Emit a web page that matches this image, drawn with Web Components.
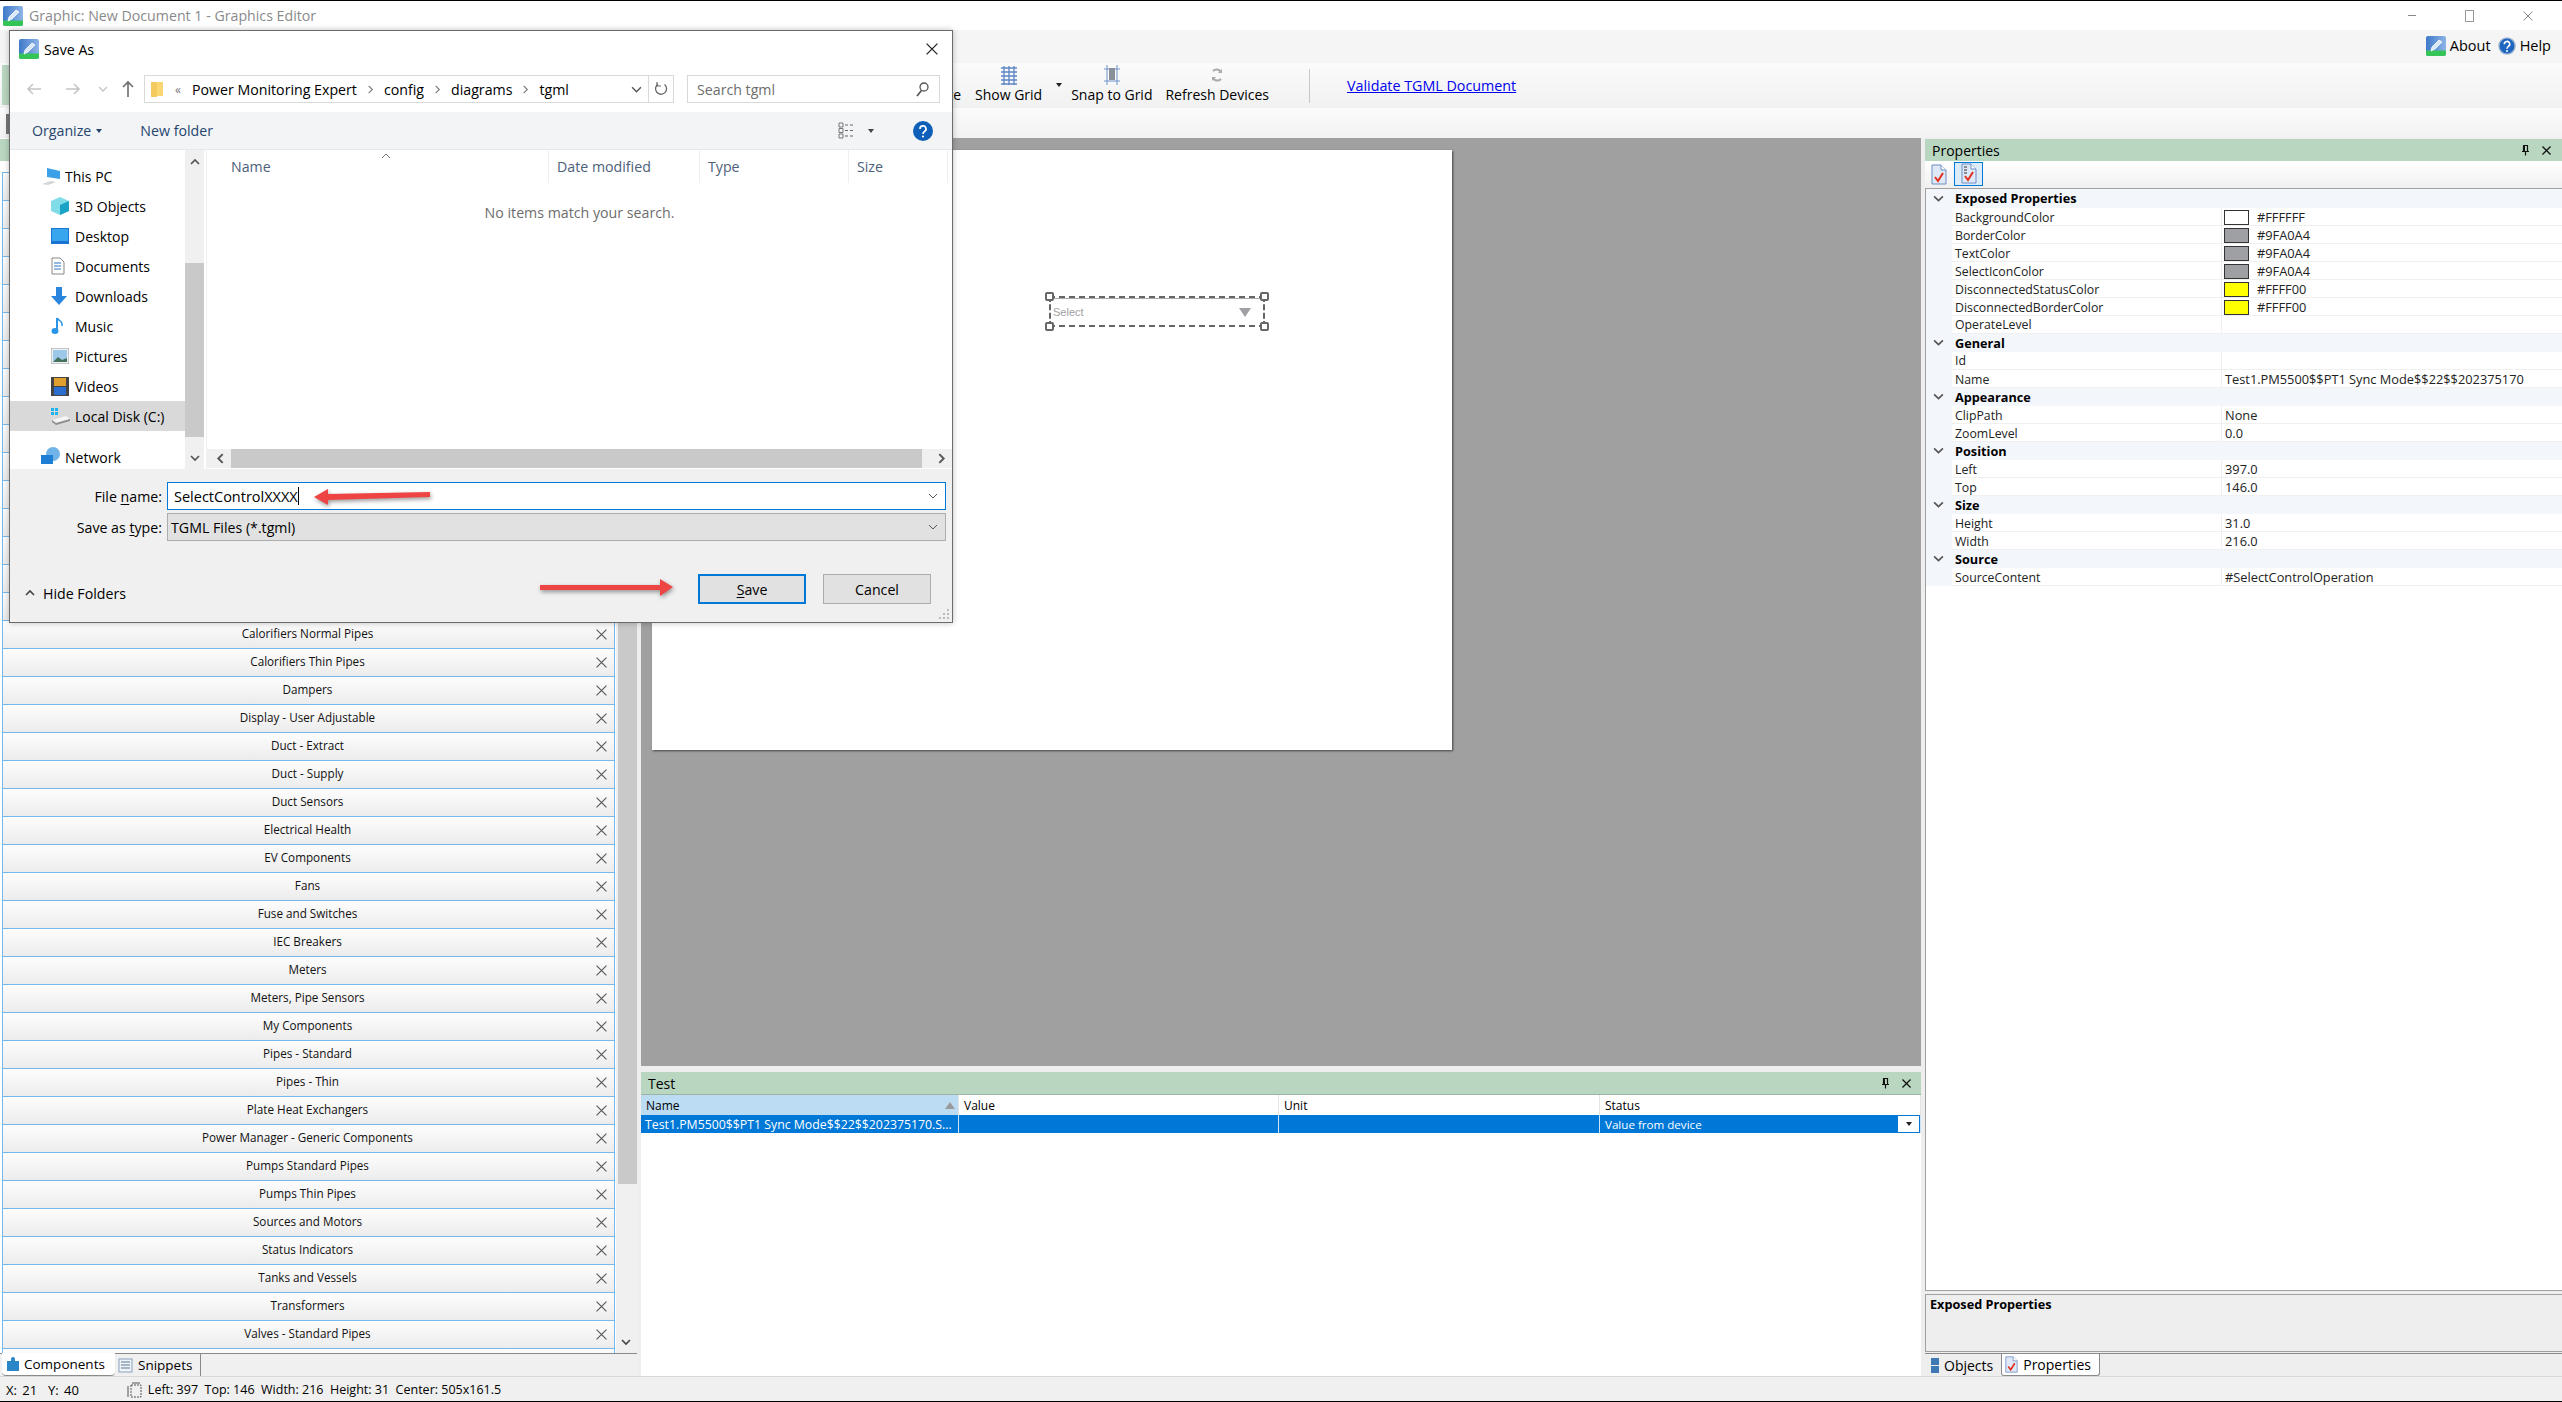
<!DOCTYPE html>
<html>
<head>
<meta charset="utf-8">
<title>Graphics Editor</title>
<style>
  html, body { margin: 0; padding: 0; background: #eee; }
  body { font-family: "Open Sans", "Noto Sans", sans-serif; font-size: 11.5px; color: #000; }
</style>
</head>
<body>
<app-shell></app-shell>

<script>
// small inline icons, shared by the elements below
const icons = {
  app: (s) => `<svg width="${s}" height="${s}" viewBox="0 0 20 20"><defs><linearGradient id="ag" x1="0" y1="0" x2="1" y2="0"><stop offset="0" stop-color="#3f79c9"/><stop offset="1" stop-color="#8db4e6"/></linearGradient></defs><rect width="20" height="20" rx="2" fill="url(#ag)"/><path d="M0 14.5h20V18a2 2 0 0 1-2 2H2a2 2 0 0 1-2-2z" fill="#35c456"/><path d="M5 15l1-4 7-7 3 2-7 7z" fill="#d8e8f8" stroke="#fff" stroke-width=".8"/></svg>`,
  pin: () => `<svg width="9" height="11" viewBox="0 0 9 11"><path d="M2 .5h5M2.5 .5v6M6.5 .5v6M1 6.5h7M4.5 6.5v4" fill="none" stroke="#111" stroke-width="1.2"/><rect x="2.5" y="1" width="1.5" height="5" fill="#111"/></svg>`,
  close: (s = 9, c = '#111', w = 1.4) => `<svg width="${s}" height="${s}" viewBox="0 0 10 10"><path d="M.5 .5l9 9M9.5 .5l-9 9" fill="none" stroke="${c}" stroke-width="${w}"/></svg>`,
  chevDown: (s = 10, c = '#555', w = 1.5) => `<svg width="${s}" height="${s}" viewBox="0 0 10 10"><path d="M1 3l4 4 4-4" fill="none" stroke="${c}" stroke-width="${w}"/></svg>`,
  chevUp: (s = 10, c = '#555', w = 1.5) => `<svg width="${s}" height="${s}" viewBox="0 0 10 10"><path d="M1 7l4-4 4 4" fill="none" stroke="${c}" stroke-width="${w}"/></svg>`,
  chevLeft: (s = 10, c = '#555', w = 1.5) => `<svg width="${s}" height="${s}" viewBox="0 0 10 10"><path d="M7 1L3 5l4 4" fill="none" stroke="${c}" stroke-width="${w}"/></svg>`,
  chevRight: (s = 10, c = '#555', w = 1.5) => `<svg width="${s}" height="${s}" viewBox="0 0 10 10"><path d="M3 1l4 4-4 4" fill="none" stroke="${c}" stroke-width="${w}"/></svg>`,
  page: (extra = '') => `<svg width="16" height="21" viewBox="0 0 16 21"><path d="M1 1h9l5 5v14H1z" fill="#dfe8f7" stroke="#6f8fc4"/><path d="M10 1v5h5" fill="#fff" stroke="#6f8fc4"/>${extra}<path d="M4 13l3 4 5-8" fill="none" stroke="#e0301e" stroke-width="2"/></svg>`,
  help: (s) => `<svg width="${s}" height="${s}" viewBox="0 0 20 20"><circle cx="10" cy="10" r="9" fill="#1f66c1" stroke="#9db4cf" stroke-width="1.5"/><path d="M7 8a3 3 0 1 1 4.6 2.4C10.500 11.200 10 11.700 10 13" fill="none" stroke="#fff" stroke-width="1.8"/><circle cx="10" cy="15.500" r="1.100" fill="#fff"/></svg>`
};

// base class: fills an open shadow root from a static markup string
class ShadowEl extends HTMLElement {
  constructor() {
    super();
    this.attachShadow({ mode: 'open' }).innerHTML = this.render();
  }
  render() { return ''; }
}

class TitleBar extends ShadowEl {
  render() {
    return `<style>
      :host { display: flex; align-items: center; height: 29px; background: #fff; border-top: 1px solid #000; padding-left: 3px; }
      .t { margin-left: 6px; color: #8a8a8a; font-size: 14.2px; }
      .ctl { margin-left: auto; display: flex; align-items: center; padding-right: 29px; gap: 49px; }
      .min { width: 8px; height: 1px; background: #888; }
      .res { width: 7px; height: 10px; border: 1px solid #999; }
    </style>
    ${icons.app(20)}<span class="t">Graphic: New Document 1 - Graphics Editor</span>
    <div class="ctl"><div class="min"></div><div class="res"></div>${icons.close(10, '#888', 1)}</div>`;
  }
}

class RibbonBar extends ShadowEl {
  render() {
    const grid = `<svg width="18" height="20" viewBox="0 0 18 20"><path d="M1 3h16M1 7h16M1 11h16M1 15h16M1 19h16M4 1v19M9 1v19M14 1v19" stroke="#5c86c6" stroke-width="1.300" fill="none"/></svg>`;
    const snap = `<svg width="18" height="22" viewBox="0 0 18 22"><path d="M1 5h16M1 17h16M4 1v20M14 1v20" stroke="#6f93c9" fill="none"/><rect x="6" y="4" width="6" height="12" fill="#8a9099"/></svg>`;
    const refresh = `<svg width="14" height="18" viewBox="0 0 14 18"><path d="M11 6a5 5 0 0 0-8-1M3 12a5 5 0 0 0 8 1" fill="none" stroke="#a9a9a9" stroke-width="2"/><path d="M8 7l4 0 0-4zM6 11l-4 0 0 4z" fill="#a9a9a9"/></svg>`;
    return `<style>
      :host { display: block; }
      .tabs { height: 33px; background: #f5f5f5; display: flex; justify-content: flex-end; align-items: center; padding: 0 8px 2px 0; box-sizing: border-box; gap: 4px; font-size: 14.5px; }
      .tabs span { margin-right: 3px; }
      .tools { height: 45px; background: linear-gradient(#fbfbfb, #f1f1f1); position: relative; display: flex; align-items: flex-end; padding-left: 929px; box-sizing: border-box; }
      .hot { position: absolute; left: 2px; top: 2px; width: 8px; height: 40px; background: #b9d6c0; }
      .tool { display: flex; flex-direction: column; align-items: center; font-size: 14px; line-height: 18px; padding-bottom: 4px; white-space: nowrap; }
      .ico { height: 23px; display: flex; align-items: center; }
      .sep { width: 1px; height: 34px; background: #c8c8c8; margin: 0 37px 5px 40px; align-self: flex-end; }
      a { color: #0000ee; font-size: 14.3px; align-self: center; white-space: nowrap; }
      .caret { width: 0; height: 0; border: 3px solid transparent; border-top: 4px solid #222; border-bottom: 0; align-self: flex-start; margin: 20px 0 0 14px; }
      .strip { height: 30px; background: linear-gradient(#fbfbfb, #f2f2f2); position: relative; }
      .mark { position: absolute; left: 6px; top: 6px; width: 3px; height: 20px; background: #777; }
    </style>
    <div class="tabs">${icons.app(20)}<span>About</span>${icons.help(18)}<span>Help</span></div>
    <div class="tools">
      <div class="hot"></div>
      <div class="tool" style="width:32px;align-items:flex-end"><div class="ico"></div>Rotate</div>
      <div class="tool" style="margin-left:14px"><div class="ico">${grid}</div>Show Grid</div>
      <div class="caret"></div>
      <div class="tool" style="margin-left:9px"><div class="ico">${snap}</div>Snap to Grid</div>
      <div class="tool" style="margin-left:13px"><div class="ico">${refresh}</div>Refresh Devices</div>
      <div class="sep"></div>
      <a href="#">Validate TGML Document</a>
    </div>
    <div class="strip"><div class="mark"></div></div>`;
  }
}

class ListRow extends ShadowEl {
  render() {
    return `<style>
      :host { display: flex; align-items: center; height: 27px; border-top: 1px solid #76b7ec; border-left: 1px solid #76b7ec; border-right: 1px solid #76b7ec; background: linear-gradient(#fdfdfd, #ececec); position: relative; font-size: 11.7px; color: #111; flex: none; }
      .n { flex: 1; text-align: center; padding: 0 2px 3px 0; white-space: nowrap; }
      .x { position: absolute; right: 7px; top: 8px; display: flex; }
    </style><div class="n"><slot></slot></div><div class="x">${icons.close(11, '#555', 1)}</div>`;
  }
}

class ComponentList extends ShadowEl {
  render() {
    return `<style>
      :host { display: flex; flex-direction: column; height: 1238px; background: #fff; }
      .head { flex: none; height: 22px; margin-top: 1px; background: #b9d6c0; }
      .body { flex: 1; min-height: 0; display: flex; overflow: hidden; padding-left: 2px; }
      .rows { width: 613px; flex: none; padding-top: 11px; display: flex; flex-direction: column; overflow: hidden; background: #fff; }
      .bar { flex: 1; background: #f0f0f0; position: relative; margin-left: 1px; }
      .thumb { height: 1023px; background: #c9c9c9; margin-left: 2px; }
      .dn { position: absolute; left: 5px; bottom: 6px; display: flex; }
      .tabs { flex: none; height: 22px; border-top: 1px solid #8a8a8a; background: #f0f0f0; display: flex; align-items: center; font-size: 13.5px; position: relative; }
      .tab { display: flex; align-items: center; gap: 4px; height: 100%; }
      .on { background: #fff; margin-top: -1px; height: 23px; width: 113px; padding-left: 4px; box-sizing: border-box; margin-left: 2px; border-bottom: 1px solid #8a8a8a; border-radius: 0 0 4px 4px; }
      .off { padding: 0 8px 0 3px; border-right: 1px solid #8a8a8a; }
    </style>
    <div class="head"></div>
    <div class="body">
      <div class="rows"><slot></slot></div>
      <div class="bar"><div class="thumb"></div><div class="dn">${icons.chevDown(10, '#444', 1.6)}</div></div>
    </div>
    <div class="tabs">
      <div class="tab on"><svg width="14" height="16" viewBox="0 0 14 16"><path d="M1 5h4V3a2 2 0 0 1 4 0v2h4v10H1z" fill="#2a86c6"/></svg>Components</div>
      <div class="tab off"><svg width="16" height="15" viewBox="0 0 16 15"><rect x="1" y="1" width="13" height="13" fill="#eef3f8" stroke="#8aa2bd"/><path d="M3 4h9M3 7h9M3 10h9" stroke="#5c7695"/></svg>Snippets</div>
    </div>`;
  }
}

// the drawing page, 800x600; the selected control sits at its own Left/Top
class DocCanvas extends ShadowEl {
  render() {
    return `<style>
      :host { display: block; height: 928px; background: #a0a0a0; padding: 12px 0 0 11px; box-sizing: border-box; }
      .page { width: 800px; height: 600px; background: #fff; box-shadow: 1px 1px 2px #444; position: relative; }
      .sel { position: absolute; left: 397px; top: 146px; width: 216px; height: 31px; border: 2px dashed #666; box-sizing: border-box; }
      .inner { position: absolute; inset: 0; border-top: 1px solid #aaa; display: flex; align-items: center; justify-content: space-between; padding: 0 12px 0 2px; color: #9fa0a4; font: 11px "Liberation Sans", sans-serif; }
      .tri { width: 0; height: 0; border: 6.500px solid transparent; border-top: 9px solid #9fa0a4; border-bottom: 0; }
      .h { position: absolute; width: 5px; height: 5px; border: 2px solid #666; background: #fff; border-radius: 2px; }
    </style>
    <div class="page"><div class="sel"><div class="inner">Select<div class="tri"></div></div>
      <div class="h" style="left:-6px;top:-6px"></div><div class="h" style="right:-6px;top:-6px"></div>
      <div class="h" style="left:-6px;bottom:-6px"></div><div class="h" style="right:-6px;bottom:-6px"></div>
    </div></div>`;
  }
}

class TestPanel extends ShadowEl {
  render() {
    return `<style>
      :host { display: flex; flex-direction: column; height: 304px; margin-top: 6px; background: #fff; font-size: 12px; }
      .head { height: 22px; background: #b9d6c0; display: flex; align-items: center; padding: 0 10px 0 7px; font-size: 14px; gap: 12px; border-bottom: 1px solid #9db3a3; flex: none; }
      .head span { margin-right: auto; }
      .row { display: grid; grid-template-columns: 318px 320px 321px 321px; height: 20px; flex: none; }
      .row > div { display: flex; align-items: center; padding-left: 5px; border-right: 1px solid #e4e4e4; white-space: nowrap; overflow: hidden; position: relative; }
      .row > div:first-child { background: #bcdcf4; }
      .tri { position: absolute; right: 3px; top: 7px; width: 0; height: 0; border: 5px solid transparent; border-bottom: 7px solid #9a9a9a; border-top: 0; }
      .sel { height: 18px; background: #0078d7; color: #fff; font-size: 11.6px; }
      .sel > div, .sel > div:first-child { background: #0078d7; border-right: 1px solid #cde3f6; }
      .sel > div:first-child { font-size: 12.3px; padding-left: 4px; }
      .drop { position: absolute; right: 1px; top: 1px; width: 21px; height: 16px; background: #fff; display: flex; align-items: center; justify-content: center; }
      .drop i { width: 0; height: 0; border: 3px solid transparent; border-top: 4px solid #222; border-bottom: 0; }
    </style>
    <div class="head"><span>Test</span>${icons.pin()}${icons.close(9)}</div>
    <div class="row"><div>Name<div class="tri"></div></div><div>Value</div><div>Unit</div><div>Status</div></div>
    <div class="row sel"><div>Test1.PM5500$$PT1 Sync Mode$$22$$202375170.S...</div><div></div><div></div><div>Value from device<div class="drop"><i></i></div></div></div>`;
  }
}

class PropSection extends ShadowEl {
  render() {
    return `<style>
      :host { display: block; }
      .h { height: 18px; box-sizing: border-box; padding-bottom: 1px; display: flex; align-items: center; background: #f3f6fb; font-weight: 700; font-size: 12.7px; }
      :host([first]) .h { height: 19px; }
      .c { width: 29px; padding-left: 7px; box-sizing: border-box; display: flex; flex: none; }
      .rows { border-left: 26px solid #f3f6fb; }
    </style>
    <div class="h"><div class="c">${icons.chevDown(11, '#555', 1.5)}</div>${this.getAttribute('name')}</div>
    <div class="rows"><slot></slot></div>`;
  }
}

class PropRow extends ShadowEl {
  render() {
    const color = this.getAttribute('color');
    const swatch = color ? `<i style="background:${color}"></i><b>${color}</b>` : (this.getAttribute('value') || '');
    return `<style>
      :host { display: grid; grid-template-columns: 270px 1fr; height: 18px; box-sizing: border-box; border-bottom: 1px solid #f0f0f0; background: #fff; font-size: 12.3px; color: #222; }
      .k { padding-left: 3px; display: flex; align-items: center; border-right: 1px solid #f0f0f0; white-space: nowrap; }
      .v { padding-left: 3px; display: flex; align-items: center; white-space: nowrap; font-size: 12.8px; }
      i { width: 23px; height: 13px; border: 1px solid #333; margin: 0 8px 0 -1px; flex: none; }
      b { font-weight: 400; }
    </style><div class="k">${this.getAttribute('name')}</div><div class="v">${swatch}</div>`;
  }
}

class PropertiesPanel extends ShadowEl {
  render() {
    return `<style>
      :host { display: flex; flex-direction: column; height: 1238px; background: #eee; }
      .head { flex: none; height: 22px; margin-top: 1px; background: #b9d6c0; display: flex; align-items: center; padding: 0 11px 0 7px; font-size: 14px; gap: 12px; }
      .head span { margin-right: auto; }
      .bar { flex: none; height: 27px; background: linear-gradient(#fff, #f0f0f0); display: flex; align-items: center; padding-left: 6px; gap: 7px; }
      .on { border: 1px solid #0078d7; background: #dcebf8; width: 27px; height: 22px; display: flex; justify-content: center; align-items: center; margin-top: -2px; }
      .grid { flex: 1; min-height: 0; background: #fff; border: 1px solid #a0a0a0; border-right: 0; box-sizing: border-box; }
      .desc { flex: none; height: 58px; margin-top: 3px; border: 1px solid #a0a0a0; border-right: 0; box-sizing: border-box; padding: 0 4px; font-weight: 700; font-size: 12.7px; background: #eee; }
      .tabs { flex: none; height: 23px; margin-top: 1px; display: flex; align-items: stretch; font-size: 14px; padding-left: 6px; border-top: 1px solid #8a8a8a; box-sizing: border-box; }
      .t { display: flex; align-items: center; gap: 5px; }
      .t.a { background: #fff; border: 1px solid #8a8a8a; border-top: 0; border-radius: 0 0 3px 3px; padding: 0 8px 0 3px; margin-left: 8px; }
    </style>
    <div class="head"><span>Properties</span>${icons.pin()}${icons.close(9)}</div>
    <div class="bar">${icons.page()}<div class="on">${icons.page('<path d="M3 4h3M3 7h3M3 10h3" stroke="#333"/>')}</div></div>
    <div class="grid"><slot></slot></div>
    <div class="desc">Exposed Properties</div>
    <div class="tabs">
      <div class="t"><svg width="8" height="15" viewBox="0 0 8 15"><rect width="8" height="7" fill="#3f79b5"/><rect y="8" width="8" height="7" fill="#3f79b5"/></svg>Objects</div>
      <div class="t a">${icons.page().replace('width="16" height="21"', 'width="13" height="17"')}Properties</div>
    </div>`;
  }
}

class StatusBar extends ShadowEl {
  render() {
    return `<style>
      :host { display: flex; align-items: center; height: 26px; background: #f0f0f0; border-top: 1px solid #d8d8d8; border-bottom: 1px solid #000; box-sizing: border-box; padding: 1px 0 0 6px; font-size: 12.5px; white-space: pre; }
      svg { margin: 0 6px 0 47px; }
      .xy { word-spacing: 2px; font-size: 13px; }
    </style><span class="xy">X: 21  Y: 40</span><svg width="16" height="16" viewBox="0 0 16 16"><rect x="5" y="3" width="10" height="12" fill="none" stroke="#555" stroke-dasharray="2 1"/><path d="M2 4v11M6 1h8" stroke="#555"/></svg>Left: 397  Top: 146  Width: 216  Height: 31  Center: 505x161.5`;
  }
}

class NavItem extends ShadowEl {
  render() {
    const indent = this.getAttribute('indent') || '0';
    return `<style>
      :host { display: flex; align-items: center; height: 30px; padding-left: ${indent}px; font-size: 14px; white-space: nowrap; flex: none; }
      :host([active]) { background: #d9d9d9; }
      .i { width: 24px; display: flex; flex: none; justify-content: flex-start; }
    </style><div class="i"><slot name="icon"></slot></div><slot></slot>`;
  }
}

class SaveDialog extends ShadowEl {
  render() {
    return `<style>
      :host { position: absolute; left: 9px; top: 30px; width: 944px; height: 593px; box-sizing: border-box; background: #fff; border: 1px solid #6c6c6c; box-shadow: 0 0 6px rgba(0,0,0,.25); display: flex; flex-direction: column; font-size: 14.2px; z-index: 5; }
      .title { flex: none; height: 40px; box-sizing: border-box; padding: 0 0 4px 9px; display: flex; align-items: center; gap: 5px; }
      .title .x { margin-left: auto; margin-right: 14px; display: flex; }
      .addr { flex: none; height: 28px; margin-top: 4px; display: flex; align-items: stretch; }
      .nav { width: 134px; flex: none; display: flex; align-items: center; color: #b8b8b8; position: relative; }
      .nav svg { position: absolute; }
      .path { width: 530px; flex: none; box-sizing: border-box; border: 1px solid #d9d9d9; display: flex; align-items: center; padding-left: 6px; position: relative; white-space: nowrap; }
      .path .folder { margin-right: 11px; flex: none; }
      .path .sp { margin: 0 9px; display: flex; }
      .path .pv { color: #777; margin-right: 11px; font-size: 12px; }
      .path .end { position: absolute; right: 0; top: 0; bottom: 0; display: flex; align-items: center; }
      .path .rf { width: 24px; height: 100%; border-left: 1px solid #d9d9d9; display: flex; align-items: center; justify-content: center; margin-left: 6px; }
      .search { width: 253px; margin-left: 13px; box-sizing: border-box; border: 1px solid #d9d9d9; display: flex; align-items: center; padding: 0 10px 0 9px; color: #6d6d6d; justify-content: space-between; }
      .bar { flex: none; height: 38px; margin-top: 9px; background: #f3f4f6; border-bottom: 1px solid #e8e8e8; box-sizing: border-box; display: flex; align-items: center; padding-left: 22px; color: #26456e; position: relative; }
      .bar .tri { width: 0; height: 0; border: 3px solid transparent; border-top: 4px solid #26456e; border-bottom: 0; margin: 0 0 0 5px; }
      .bar .right { margin-left: auto; display: flex; align-items: center; margin-right: 19px; }
      .body { flex: none; height: 319px; display: grid; grid-template-columns: 175px 19px 3px 1fr; overflow: hidden; }
      .navp { padding-top: 11px; display: flex; flex-direction: column; overflow: hidden; }
      .vbar { background: #f0f0f0; position: relative; }
      .vthumb { position: absolute; left: 0; right: 0; top: 113px; bottom: 32px; background: #c9c9c9; }
      .arr { position: absolute; left: 5px; display: flex; }
      .sepv { border-right: 1px solid #f0f0f0; }
      .files { display: flex; flex-direction: column; min-width: 0; position: relative; }
      .cols { height: 33px; display: grid; grid-template-columns: 342px 151px 149px 99px; flex: none; color: #4c607a; }
      .cols div { border-right: 1px solid #eceff3; display: flex; align-items: center; padding-left: 8px; }
      .cols div:first-child { padding-left: 24px; }
      .none { text-align: center; color: #6d6d6d; padding-top: 20px; flex: 1; }
      .sort { position: absolute; left: 174px; top: 1px; display: flex; }
      .hbar { flex: none; height: 19px; margin-bottom: 1px; padding: 0 5px 0 8px; background: #f0f0f0; display: flex; align-items: center; }
      .hthumb { margin: 0 14px 0 5px; flex: 1; height: 100%; background: #c9c9c9; }
      .foot { flex: 1; background: #f0f0f0; padding: 13px 6px 0 0; position: relative; }
      .line { display: flex; align-items: center; height: 28px; margin-bottom: 3px; }
      .lbl { width: 157px; flex: none; text-align: right; padding-right: 5px; box-sizing: border-box; white-space: nowrap; }
      u { text-underline-offset: 2px; }
      .inp { flex: 1; height: 100%; box-sizing: border-box; display: flex; align-items: center; padding: 0 7px 0 6px; justify-content: space-between; border: 1px solid #0078d7; background: #fff; }
      .inp.ro { background: #e1e1e1; border-color: #adadad; padding-left: 3px; }
      .caret { width: 1px; height: 18px; background: #000; }
      .name { display: flex; align-items: center; font-size: 14.5px; }
      .btns { position: absolute; left: 0; right: 0; top: 105px; height: 30px; display: flex; align-items: center; }
      .hide { display: flex; align-items: center; gap: 8px; margin-left: 15px; margin-top: 8px; }
      .b { width: 108px; height: 30px; box-sizing: border-box; border: 1px solid #adadad; background: #e1e1e1; display: flex; align-items: center; justify-content: center; }
      .b.def { border: 2px solid #0078d7; margin-left: auto; }
      .b.can { margin: 0 21px 0 17px; }
      .grip { position: absolute; right: 2px; bottom: 2px; display: flex; }
      .ann { position: absolute; left: 0; top: 0; pointer-events: none; overflow: visible; filter: drop-shadow(1px 2px 2px rgba(0,0,0,.4)); }
    </style>
    <div class="title">${icons.app(20)}<span>Save As</span><div class="x">${icons.close(12, '#222', 1.1)}</div></div>
    <div class="addr">
      <div class="nav">
        <svg style="left:16px;top:8px" width="16" height="12" viewBox="0 0 16 12"><path d="M15 6H2M7 1L2 6l5 5" fill="none" stroke="#c4c4c4" stroke-width="1.500"/></svg>
        <svg style="left:55px;top:8px" width="16" height="12" viewBox="0 0 16 12"><path d="M1 6h13M9 1l5 5-5 5" fill="none" stroke="#c4c4c4" stroke-width="1.500"/></svg>
        <svg style="left:88px;top:9px" width="10" height="10" viewBox="0 0 10 10"><path d="M1 3l4 4 4-4" fill="none" stroke="#c4c4c4" stroke-width="1.300"/></svg>
        <svg style="left:112px;top:5px" width="12" height="18" viewBox="0 0 12 18"><path d="M6 17V2M1 7l5-5 5 5" fill="none" stroke="#6d6d6d" stroke-width="1.600"/></svg>
      </div>
      <div class="path">
        <svg class="folder" width="13" height="17" viewBox="0 0 13 17"><path d="M0 1h12v14H3l-3 1z" fill="#fbd774"/><path d="M0 1h6v15H0z" fill="#f4c95d"/></svg>
        <span class="pv">«</span>
        <span>Power Monitoring Expert</span><span class="sp">${icons.chevRight(9, '#777', 1.2)}</span>
        <span>config</span><span class="sp">${icons.chevRight(9, '#777', 1.2)}</span>
        <span>diagrams</span><span class="sp">${icons.chevRight(9, '#777', 1.2)}</span>
        <span>tgml</span>
        <div class="end">${icons.chevDown(11, '#555', 1.3)}<div class="rf"><svg width="14" height="16" viewBox="0 0 14 16"><path d="M10.500 3.500A5.500 5.500 0 1 1 4 3.200" fill="none" stroke="#666" stroke-width="1.300"/><path d="M3 1v4h4" fill="none" stroke="#666" stroke-width="1.200"/></svg></div></div>
      </div>
      <div class="search">Search tgml<svg width="13" height="15" viewBox="0 0 13 15"><circle cx="8" cy="5" r="4" fill="none" stroke="#555" stroke-width="1.300"/><path d="M5.500 8.500L1 14" stroke="#555" stroke-width="1.700"/></svg></div>
    </div>
    <div class="bar">Organize<div class="tri"></div><span style="margin-left:38px">New folder</span>
      <div class="right">
        <svg width="18" height="17" viewBox="0 0 18 17"><path d="M1 1h4v4H1zM1 6.500h4v4H1zM1 12h4v4H1z" fill="none" stroke="#777"/><path d="M7 3h3M12 3h3M7 8.500h3M12 8.500h3M7 14h3M12 14h3" stroke="#666"/></svg>
        <div class="tri" style="margin:0 39px 0 12px;border-top-color:#444"></div>
        <svg width="20" height="20" viewBox="0 0 20 20"><circle cx="10" cy="10" r="10" fill="#0f5fb8"/><path d="M7 8a3 3 0 1 1 4.600 2.400C10.500 11.200 10 11.700 10 13" fill="none" stroke="#fff" stroke-width="1.700"/><circle cx="10" cy="15.500" r="1.100" fill="#fff"/></svg>
      </div>
    </div>
    <div class="body">
      <div class="navp"><slot name="nav"></slot></div>
      <div class="vbar">
        <div class="arr" style="top:7px">${icons.chevUp(10, '#555', 1.7)}</div>
        <div class="vthumb"></div>
        <div class="arr" style="bottom:6px">${icons.chevDown(10, '#555', 1.7)}</div>
      </div>
      <div class="sepv"></div>
      <div class="files">
        <div class="sort">${icons.chevUp(10, '#777', 1)}</div>
        <div class="cols"><div>Name</div><div>Date modified</div><div>Type</div><div>Size</div></div>
        <div class="none">No items match your search.</div>
        <div class="hbar">${icons.chevLeft(11, '#555', 1.7)}<div class="hthumb"></div>${icons.chevRight(11, '#555', 1.7)}</div>
      </div>
    </div>
    <div class="foot">
      <div class="line"><div class="lbl">File <u>n</u>ame:</div><div class="inp"><span class="name">SelectControlXXXX<span class="caret"></span></span>${icons.chevDown(10, '#555', 1)}</div></div>
      <div class="line"><div class="lbl">Save as <u>t</u>ype:</div><div class="inp ro"><span>TGML Files (*.tgml)</span>${icons.chevDown(10, '#555', 1)}</div></div>
      <div class="btns">
        <div class="hide">${icons.chevUp(10, '#444', 1.6)}<span>Hide Folders</span></div>
        <div class="b def"><span><u>S</u>ave</span></div>
        <div class="b can">Cancel</div>
      </div>
      <svg class="grip" width="12" height="12" viewBox="0 0 12 12"><path d="M9 1h2v2H9zM5 5h2v2H5zM9 5h2v2H9zM1 9h2v2H1zM5 9h2v2H5zM9 9h2v2H9z" fill="#bbb"/></svg>
    </div>
    <svg class="ann" width="942" height="591" viewBox="0 0 942 591">
      <path d="M304 466 L318 458 L318 463 L420 461 L420 466 L318 469 L318 474 Z" fill="#ef4444"/>
      <path d="M530 554 L650 554 L650 548 L663 556 L650 565 L650 559 L530 559 Z" fill="#ef4444"/>
    </svg>`;
  }
}

// the whole window; rows go from the title bar down to the status bar
class AppShell extends ShadowEl {
  render() {
    return `<style>
      :host { display: grid; grid-template-rows: 30px 108px 1238px 26px; width: 2562px; height: 1402px; position: relative; overflow: hidden; }
      .main { display: grid; grid-template-columns: 637px 1280px 637px; grid-template-rows: 1238px; column-gap: 4px; min-height: 0; background: #eee; }
      .center { display: flex; flex-direction: column; min-width: 0; }
    </style>
    <title-bar></title-bar>
    <ribbon-bar></ribbon-bar>
    <div class="main">
      <component-list id="list"></component-list>
      <div class="center"><doc-canvas></doc-canvas><test-panel></test-panel></div>
      <properties-panel id="props"></properties-panel>
    </div>
    <status-bar></status-bar>
    <save-dialog id="dlg"></save-dialog>`;
  }
  connectedCallback() {
    this.fillList();
    this.fillProps();
    this.fillNav();
  }
  fillList() {
    const names = ['Calorifiers Normal Pipes', 'Calorifiers Thin Pipes', 'Dampers', 'Display - User Adjustable',
      'Duct - Extract', 'Duct - Supply', 'Duct Sensors', 'Electrical Health', 'EV Components', 'Fans',
      'Fuse and Switches', 'IEC Breakers', 'Meters', 'Meters, Pipe Sensors', 'My Components', 'Pipes - Standard',
      'Pipes - Thin', 'Plate Heat Exchangers', 'Power Manager - Generic Components', 'Pumps Standard Pipes',
      'Pumps Thin Pipes', 'Sources and Motors', 'Status Indicators', 'Tanks and Vessels', 'Transformers',
      'Valves - Standard Pipes'];
    const list = this.shadowRoot.getElementById('list');
    // 16 rows are hidden behind the dialog, one more is cut off at the tabs
    const all = [...Array(16).fill(''), ...names, ''];
    all.forEach((name) => {
      const row = document.createElement('list-row');
      row.textContent = name;
      list.appendChild(row);
    });
  }
  fillProps() {
    const data = [
      ['Exposed Properties', [['BackgroundColor', '#FFFFFF', 1], ['BorderColor', '#9FA0A4', 1], ['TextColor', '#9FA0A4', 1],
        ['SelectIconColor', '#9FA0A4', 1], ['DisconnectedStatusColor', '#FFFF00', 1], ['DisconnectedBorderColor', '#FFFF00', 1], ['OperateLevel', '']]],
      ['General', [['Id', ''], ['Name', 'Test1.PM5500$$PT1 Sync Mode$$22$$202375170']]],
      ['Appearance', [['ClipPath', 'None'], ['ZoomLevel', '0.0']]],
      ['Position', [['Left', '397.0'], ['Top', '146.0']]],
      ['Size', [['Height', '31.0'], ['Width', '216.0']]],
      ['Source', [['SourceContent', '#SelectControlOperation']]]
    ];
    const props = this.shadowRoot.getElementById('props');
    data.forEach(([title, rows], i) => {
      const sec = document.createElement('prop-section');
      if (i === 0) sec.setAttribute('first', '');
      sec.setAttribute('name', title);
      // the element renders in its constructor, so set the header here again
      sec.shadowRoot.innerHTML = sec.render();
      rows.forEach(([name, value, isColor]) => {
        const row = document.createElement('prop-row');
        row.setAttribute('name', name);
        row.setAttribute(isColor ? 'color' : 'value', value);
        row.shadowRoot.innerHTML = row.render();
        sec.appendChild(row);
      });
      props.appendChild(sec);
    });
  }
  fillNav() {
    const ico = {
      pc: '<svg width="20" height="19" viewBox="0 0 20 19"><path d="M6 1l13 3v8L6 10z" fill="#3aa0e8"/><path d="M1 17l9-3 5 1-8 3z" fill="#d4d4d4"/></svg>',
      cube: '<svg width="18" height="18" viewBox="0 0 18 18"><path d="M9 0l9 4v10l-9 4-9-4V4z" fill="#7fdce8"/><path d="M9 8v10l9-4V4z" fill="#1aa3c4"/></svg>',
      desk: '<svg width="18" height="16" viewBox="0 0 18 16"><rect width="18" height="16" fill="#1a73d1"/><rect x="1" y="1" width="16" height="12" fill="#38a6ee"/></svg>',
      doc: '<svg width="14" height="18" viewBox="0 0 14 18"><path d="M1 1h8l4 4v12H1z" fill="#fff" stroke="#888"/><path d="M3 6h7M3 9h7M3 12h7" stroke="#2a76c4"/></svg>',
      down: '<svg width="16" height="18" viewBox="0 0 16 18"><path d="M5 0h6v9h5l-8 9-8-9h5z" fill="#2a86dd"/></svg>',
      music: '<svg width="14" height="18" viewBox="0 0 14 18"><path d="M6 1v12" stroke="#2a95e8" stroke-width="2"/><ellipse cx="4" cy="14" rx="3.500" ry="3" fill="#2a95e8"/><path d="M6 1c2 3 6 3 5 8" fill="none" stroke="#2a95e8" stroke-width="1.500"/></svg>',
      pic: '<svg width="18" height="16" viewBox="0 0 18 16"><rect width="18" height="16" fill="#eef2f7" stroke="#999"/><rect x="2" y="2" width="14" height="12" fill="#9cc8ea"/><path d="M2 14l5-5 4 3 5-2v4z" fill="#45705a"/></svg>',
      vid: '<svg width="18" height="19" viewBox="0 0 18 19"><rect width="18" height="19" fill="#444"/><rect x="3" y="1" width="12" height="8" fill="#e0a030"/><rect x="3" y="10" width="12" height="8" fill="#2a6fd0"/></svg>',
      disk: '<svg width="20" height="18" viewBox="0 0 20 18"><path d="M0 1h3v3H0zM4 1h3v3H4zM0 5h3v3H0zM4 5h3v3H4z" fill="#1cb4f0"/><path d="M1 13l14-4 4 3-14 4z" fill="#f4f4f4"/><path d="M1 13l4 3 14-4v2L5 18l-4-3z" fill="#8f8f8f"/></svg>',
      net: '<svg width="20" height="21" viewBox="0 0 20 21"><circle cx="12" cy="7" r="7" fill="#6fb3e8"/><rect x="0" y="8" width="12" height="9" fill="#1f7fd4"/></svg>'
    };
    const items = [
      ['This PC', ico.pc, 31],
      ['3D Objects', ico.cube, 41],
      ['Desktop', ico.desk, 41],
      ['Documents', ico.doc, 41],
      ['Downloads', ico.down, 41],
      ['Music', ico.music, 41],
      ['Pictures', ico.pic, 41],
      ['Videos', ico.vid, 41],
      ['Local Disk (C:)', ico.disk, 41, true],
      ['Network', ico.net, 31, false, true]
    ];
    const dlg = this.shadowRoot.getElementById('dlg');
    items.forEach(([label, svg, indent, active, spaced]) => {
      const el = document.createElement('nav-item');
      el.slot = 'nav';
      el.setAttribute('indent', indent);
      if (active) el.setAttribute('active', '');
      if (spaced) el.style.marginTop = '11px';
      el.shadowRoot.innerHTML = el.render();
      el.innerHTML = `<span slot="icon" style="display:flex">${svg}</span>${label}`;
      dlg.appendChild(el);
    });
  }
}

customElements.define('title-bar', TitleBar);
customElements.define('ribbon-bar', RibbonBar);
customElements.define('list-row', ListRow);
customElements.define('component-list', ComponentList);
customElements.define('doc-canvas', DocCanvas);
customElements.define('test-panel', TestPanel);
customElements.define('prop-section', PropSection);
customElements.define('prop-row', PropRow);
customElements.define('properties-panel', PropertiesPanel);
customElements.define('status-bar', StatusBar);
customElements.define('nav-item', NavItem);
customElements.define('save-dialog', SaveDialog);
customElements.define('app-shell', AppShell);
</script>
</body>
</html>
